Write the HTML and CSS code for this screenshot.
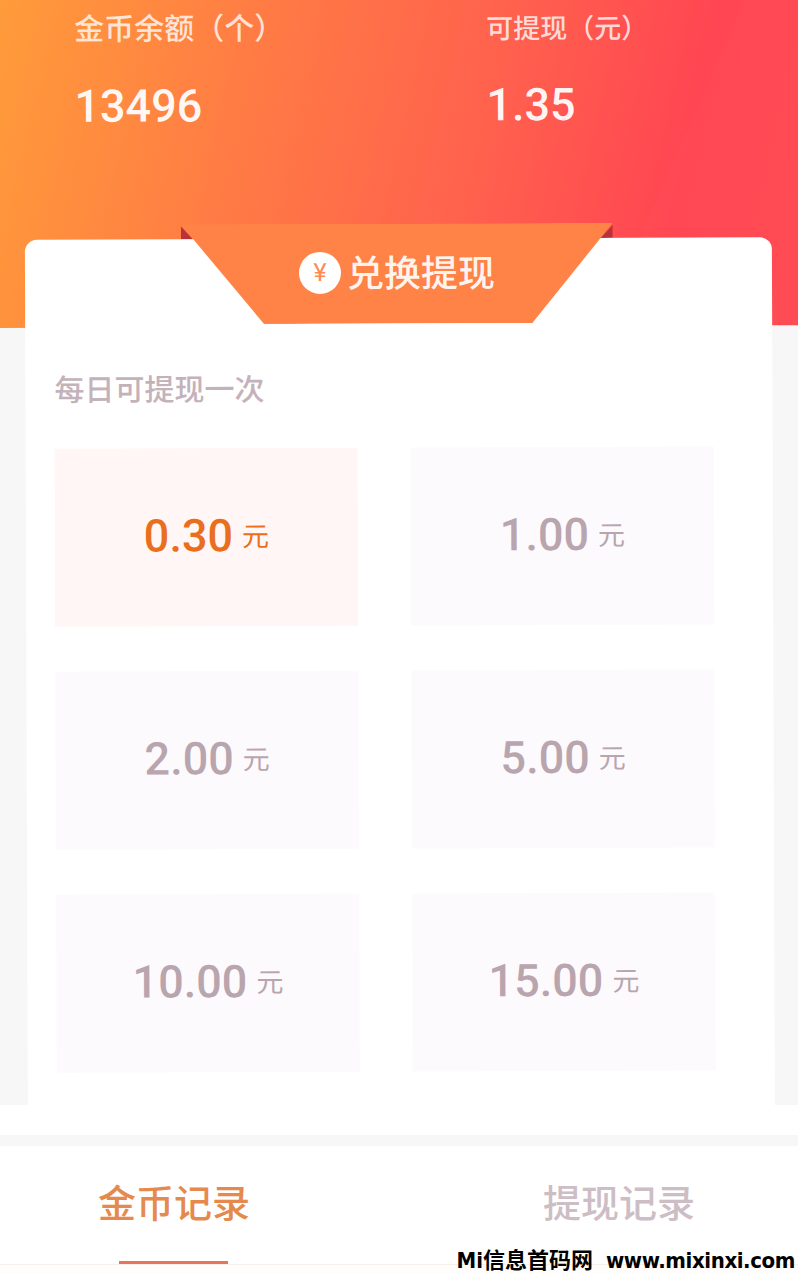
FILE: index.html
```html
<!DOCTYPE html>
<html lang="zh-CN">
<head>
    <meta charset="UTF-8">
    <title>兑换提现</title>
    <link rel="stylesheet" href="styles.css">
</head>
<body>
<div class="page">
    <div class="top">
        <div class="tilt">
            <div class="hero">
                <div class="stat stat-coin">
                    <div class="stat-label">金币余额（个）</div>
                    <div class="stat-num">13496</div>
                </div>
                <div class="stat stat-cash">
                    <div class="stat-label small">可提现（元）</div>
                    <div class="stat-num">1.35</div>
                </div>
            </div>
            <div class="card">
                <div class="ribbon">
                    <span class="fold fold-l"></span>
                    <span class="fold fold-r"></span>
                    <div class="ribbon-body">
                        <span class="coin">¥</span>
                        <span class="ribbon-text">兑换提现</span>
                    </div>
                </div>
                <div class="tip">每日可提现一次</div>
                <ul class="amounts">
                    <li class="amount active"><b>0.30</b><span>元</span></li>
                    <li class="amount"><b>1.00</b><span>元</span></li>
                    <li class="amount"><b>2.00</b><span>元</span></li>
                    <li class="amount"><b>5.00</b><span>元</span></li>
                    <li class="amount"><b>10.00</b><span>元</span></li>
                    <li class="amount"><b>15.00</b><span>元</span></li>
                </ul>
            </div>
        </div>
    </div>
    <div class="spacer"></div>
    <div class="tabs">
        <div class="tab tab-on">金币记录<i class="tab-line"></i></div>
        <div class="tab">提现记录</div>
    </div>
    <div class="tabs-foot"></div>
    <div class="mark">Mi信息首码网 <span class="mark-url">www.mixinxi.com</span></div>
</div>
</body>
</html>
```

FILE: styles.css
```css
ul, li, body {
    list-style: none;
    margin: 0;
    padding: 0;
}

body {
    background: #f7f7f7;
    font-family: Roboto, "Noto Sans CJK SC", sans-serif;
}

.page {
    width: 798px;
    height: 1274px;
    overflow: hidden;
    position: relative;
}

/* 截图本身略微倾斜 */
.top {
    height: 1105px;
    overflow: hidden;
}

.tilt {
    transform: rotate(-0.2deg);
    transform-origin: 0 0;
}

/* 顶部渐变 */
.hero {
    position: relative;
    width: 812px;
    height: 334px;
    margin: -6px 0 0 -6px;
    padding: 6px 0 0 80px;
    display: flex;
    box-sizing: border-box;
    color: #fff;
    background: linear-gradient(103deg, #ff9c3a 0%, #ff7a45 32%, #ff604e 60%, #ff4652 82%, #ff4a52 100%);
}

.hero::after {
    content: "";
    position: absolute;
    top: 0;
    right: 0;
    bottom: 0;
    left: 0;
    background: rgba(255, 255, 255, 0.012);
    clip-path: polygon(754px 0, 100% 0, 100% 100%, 606px 100%);
}

.stat-coin {
    width: 412px;
}

.stat-label {
    font-size: 30px;
    font-weight: 500;
    line-height: 42px;
    margin-top: 9px;
    color: rgba(255, 255, 255, 0.78);
}

.stat-label.small {
    font-size: 27px;
    line-height: 38px;
    margin-top: 12px;
}

.stat-num {
    font-size: 45px;
    font-weight: 500;
    line-height: 52px;
    margin-top: 30px;
    margin-left: 0;
    color: rgba(255, 255, 255, 0.95);
}

.stat-cash .stat-num {
    margin-top: 31px;
}

.card {
    position: relative;
    width: 747px;
    height: 880px;
    margin: -88px 0 0 24px;
    padding: 130px 0 0 29px;
    box-sizing: border-box;
    background: #fff;
    border-radius: 12px 12px 0 0;
}

/* 标题飘带 */
.ribbon {
    position: absolute;
    left: 156px;
    top: -15px;
    width: 432px;
    height: 100px;
}

.ribbon-body {
    height: 100%;
    display: flex;
    align-items: center;
    justify-content: center;
    padding-bottom: 2px;
    box-sizing: border-box;
    background: #ff8347;
    clip-path: polygon(0 0, 100% 0, 351px 100%, 83px 100%);
}

.fold {
    position: absolute;
    top: 2px;
    width: 12px;
    height: 13px;
    background: #b9323a;
}

.fold-l {
    left: 0;
    clip-path: polygon(0 0, 100% 100%, 0 100%);
}

.fold-r {
    right: 0;
    clip-path: polygon(100% 0, 100% 100%, 0 100%);
}

.coin {
    width: 42px;
    height: 42px;
    margin-right: 6px;
    border-radius: 50%;
    background: #fff;
    color: #ff8a52;
    font-size: 25px;
    line-height: 42px;
    text-align: center;
}

.ribbon-text {
    font-size: 37px;
    font-weight: 500;
    line-height: 46px;
    margin-top: 3px;
    color: rgba(255, 255, 255, 0.92);
}

.tip {
    font-size: 30px;
    font-weight: 500;
    line-height: 40px;
    margin-top: 1px;
    margin-bottom: -1px;
    color: #c4b2ba;
}

.amounts {
    display: grid;
    grid-template-columns: 303px 303px;
    grid-auto-rows: 178px;
    column-gap: 53px;
    row-gap: 45px;
    margin-top: 39px;
}

.amount {
    line-height: 176px;
    text-align: center;
    background: #fdfafd;
    color: #b9a5ae;
}

.amount b {
    font-size: 45px;
    font-weight: 500;
}

.amount span {
    font-size: 27px;
    margin-left: 9px;
    vertical-align: 5px;
}

.amount.active {
    background: #fff6f5;
    color: #e96f1e;
}

.spacer {
    height: 30px;
    background: #fff;
}

.tabs {
    height: 119px;
    margin-top: 11px;
    display: flex;
    justify-content: space-between;
    padding: 0 103px 0 98px;
    box-sizing: border-box;
    border-bottom: 1px solid #f8f0ec;
    background: #fff;
}

.tab {
    position: relative;
    height: 118px;
    font-size: 38px;
    font-weight: 500;
    line-height: 116px;
    color: #cdbdc4;
}

.tab-on {
    color: #e58a4c;
}

.tab-line {
    position: absolute;
    left: 21px;
    bottom: 0;
    width: 109px;
    height: 3px;
    background: #e8745a;
}

.tabs-foot {
    height: 9px;
    background: #fffdfc;
}

/* 水印 */
.mark {
    position: absolute;
    right: 3px;
    bottom: 0;
    font-family: "Liberation Sans Narrow", "DejaVu Sans Condensed", "Noto Sans CJK SC", sans-serif;
    font-size: 22px;
    font-weight: 700;
    line-height: 26px;
    white-space: nowrap;
    color: #000;
}

.mark-url {
    margin-left: 6px;
    letter-spacing: -0.4px;
}
```
